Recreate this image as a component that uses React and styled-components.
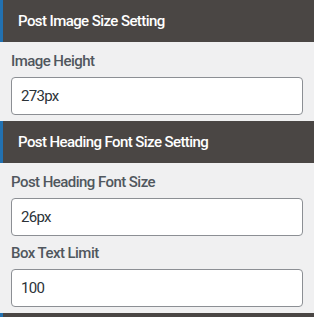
import React from 'react';
import styled, { createGlobalStyle } from 'styled-components';

const GlobalStyle = createGlobalStyle`
	html, body {
		margin: 0;
		padding: 0;
		background: #f0f0f1;
		font-family: Roboto, 'Noto Sans', sans-serif;
		overflow: hidden;
	}
`;

const Panel = styled.div`
	width: 314px;
	height: 317px;
	overflow: hidden;
	background: #f0f0f1;
`;

const SectionHeader = styled.div`
	height: 42px;
	display: flex;
	align-items: center;
	box-sizing: border-box;
	padding-left: 15px;
	border-left: 3px solid #2271b1;
	background: #4a4644;
	color: #fff;
	font-size: 15px;
	font-weight: 500;
	letter-spacing: -0.58px;
`;

const SectionBody = styled.div`
	padding: 2px 11px 6px;
`;

const Label = styled.label`
	display: block;
	padding: 7px 0 6px;
	line-height: 20px;
	font-size: 15px;
	font-weight: 500;
	color: #50575e;
	letter-spacing: -0.55px;
`;

const Input = styled.input`
	display: block;
	width: 100%;
	height: 38px;
	box-sizing: border-box;
	margin: 0;
	padding: 0 9px;
	border: 1px solid #8c8f94;
	border-radius: 4px;
	background: #fff;
	font-family: Roboto, 'Noto Sans', sans-serif;
	font-size: 15px;
	letter-spacing: -0.7px;
	color: #2c3338;
	outline: none;
`;

const Field = ({ label, value }) => (
	<>
		<Label>{label}</Label>
		<Input defaultValue={value} />
	</>
);

const Section = ({ title, children }) => (
	<>
		<SectionHeader>{title}</SectionHeader>
		<SectionBody>{children}</SectionBody>
	</>
);

const App = () => (
	<Panel>
		<GlobalStyle />
		<Section title="Post Image Size Setting">
			<Field label="Image Height" value="273px" />
		</Section>
		<Section title="Post Heading Font Size Setting">
			<Field label="Post Heading Font Size" value="26px" />
			<Field label="Box Text Limit" value="100" />
		</Section>
		<SectionHeader />
	</Panel>
);

export default App;
